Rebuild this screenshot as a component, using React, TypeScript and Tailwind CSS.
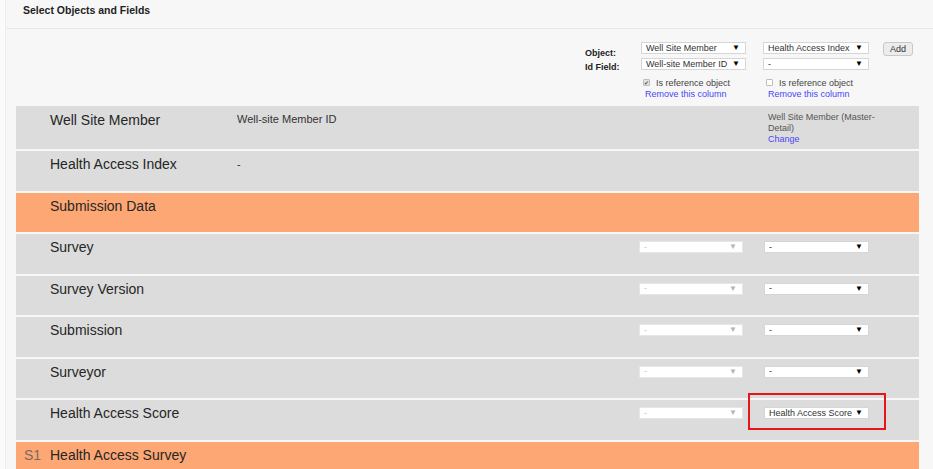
type Row = {
  label: string;
  prefix?: string;
  section?: boolean;
  idField?: string;
  fields?: boolean;
  value?: string;
  highlight?: boolean;
};

const rows: Row[] = [
  { label: "Health Access Index", idField: "-" },
  { label: "Submission Data", section: true },
  { label: "Survey", fields: true },
  { label: "Survey Version", fields: true },
  { label: "Submission", fields: true },
  { label: "Surveyor", fields: true },
  { label: "Health Access Score", fields: true, value: "Health Access Score", highlight: true },
  { label: "Health Access Survey", prefix: "S1", section: true },
];

function FakeSelect({
  value,
  width,
  disabled,
}: {
  value: string;
  width: string;
  disabled?: boolean;
}) {
  return (
    <div
      className={`relative flex h-[12px] items-center bg-white pl-[4px] text-[9px] leading-none ${width} ${
        disabled ? "border border-[#e6e6e6] text-[#c4c4c4]" : "border border-[#d6d6d6] text-[#333]"
      }`}
    >
      <span>{value}</span>
      <span
        className={`absolute right-[5px] top-[1px] text-[8px] leading-none ${
          disabled ? "text-[#b5b5b5]" : "text-black"
        }`}
      >
        ▼
      </span>
    </div>
  );
}

function RefColumn({ checked, left }: { checked?: boolean; left: string }) {
  return (
    <div className={`mt-[7px] ${left}`}>
      <div className="flex h-[11px] items-center">
        {checked ? (
          <span className="ml-[2px] flex h-[7px] w-[7px] items-center justify-center rounded-[1px] border border-[#bdbdbd] bg-[#e4e4e4] text-[6px] leading-none text-[#555]">
            ✔
          </span>
        ) : (
          <span className="ml-[2px] h-[7px] w-[7px] rounded-[1px] border border-[#bdbdbd] bg-white" />
        )}
        <span className="ml-[6px] pt-[1px] text-[9px] leading-[11px] text-[#444]">Is reference object</span>
      </div>
      <div className="ml-[4px] pt-[1px] text-[9px] leading-[11px] text-[#4848f2]">Remove this column</div>
    </div>
  );
}

function ObjectConfig() {
  return (
    <div className="flex h-[77px] pl-[569px] pt-[13px]">
      <div className="w-[56px] pt-[4px] text-[9px] font-bold leading-[14px] text-[#222]">
        <div>Object:</div>
        <div>Id Field:</div>
      </div>
      <div className="w-[122px]">
        <FakeSelect value="Well Site Member" width="w-[105px]" />
        <div className="mt-[4px]">
          <FakeSelect value="Well-site Member ID" width="w-[105px]" />
        </div>
        <RefColumn checked left="" />
      </div>
      <div className="w-[120px]">
        <FakeSelect value="Health Access Index" width="w-[106px]" />
        <div className="mt-[4px]">
          <FakeSelect value="-" width="w-[106px]" />
        </div>
        <RefColumn left="ml-[1px]" />
      </div>
      <button className="h-[14px] w-[30px] rounded-[3px] border border-[#c9c9c9] bg-[#ececec] text-[9px] leading-none text-[#333]">
        Add
      </button>
    </div>
  );
}

function TableRow({ row }: { row: Row }) {
  return (
    <div
      className={`mt-[2px] flex h-[39.5px] ${row.section ? "bg-[#fca774]" : "bg-[#dcdcdc]"}`}
    >
      <div className="flex w-[221px] pt-[5px] text-[14px] leading-[16px] text-[#262626]">
        <span className="w-[34px] pl-[8px] text-[#7b6a60]">{row.prefix}</span>
        <span>{row.label}</span>
      </div>
      <div className="w-[402px] pt-[6px] text-[11px] leading-[14px] text-[#333]">
        {row.idField}
      </div>
      {row.fields && (
        <>
          <div className="w-[125px] pt-[7px]">
            <FakeSelect value="-" width="w-[104px]" disabled />
          </div>
          <div className="relative pt-[7px]">
            <FakeSelect value={row.value ?? "-"} width="w-[105px]" />
            {row.highlight && (
              <div className="absolute left-[-16px] top-[-7px] h-[37px] w-[138px] border-2 border-[#e8141c]" />
            )}
          </div>
        </>
      )}
    </div>
  );
}

export default function App() {
  return (
    <div className="h-[469px] w-[933px] overflow-hidden bg-[#fbfbfb] font-['Liberation_Sans',Arial,sans-serif]">
      <div className="ml-[5px] h-full border-l border-[#ececec] bg-[#f7f7f7]">
        <div className="flex h-[29px] border-b border-[#e9e9e9] pl-[17px] pt-[3px] text-[10.5px] font-bold leading-[14px] text-[#222]">
          Select Objects and Fields
        </div>

        <div className="w-[913px] pl-[10px]">
          <ObjectConfig />

          {/* first object row, holds the master-detail relation */}
          <div className="flex h-[43px] bg-[#dcdcdc]">
            <div className="flex w-[221px] pt-[6px] text-[14px] leading-[16px] text-[#262626]">
              <span className="w-[34px]" />
              <span>Well Site Member</span>
            </div>
            <div className="w-[402px] pt-[6px] text-[11px] leading-[14px] text-[#333]">
              Well-site Member ID
            </div>
            <div className="w-[125px]" />
            <div className="ml-[4px] w-[116px] pt-[6px] text-[9px] leading-[11px] text-[#555]">
              Well Site Member (Master-Detail)
              <div className="text-[#4848f2]">Change</div>
            </div>
          </div>

          {rows.map((row) => (
            <TableRow key={row.label} row={row} />
          ))}
        </div>
      </div>
    </div>
  );
}
